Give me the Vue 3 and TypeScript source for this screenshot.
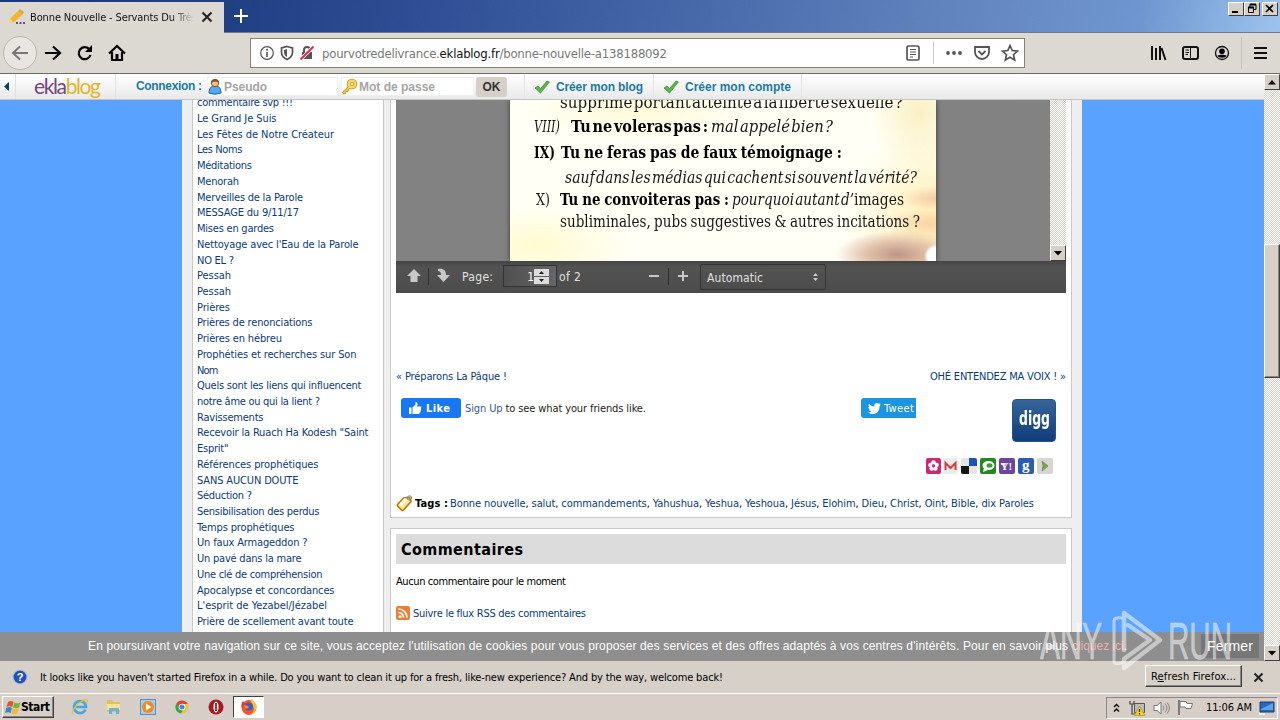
<script setup lang="ts">
interface FitLink { label: string; w: number }
interface Run { t: string; x: number; w: number; k: string }
interface Line { h: number; runs: Run[] }

// Spreads the letters of an element so that the run takes the given width.
const fit = (el: HTMLElement, width: number) => {
  el.style.letterSpacing = '0px'
  const natural = el.getBoundingClientRect().width
  const count = Array.from(el.textContent || '').length
  if (count > 1) el.style.letterSpacing = (width - natural) / (count - 1) + 'px'
  el.style.width = width + 'px'
}
const vFit = { mounted: (el: HTMLElement, b: { value: number }) => fit(el, b.value) }

// Narrows the glyphs themselves, as in a condensed face.
const vSqueeze = {
  mounted: (el: HTMLElement, b: { value: number }) => {
    const natural = el.getBoundingClientRect().width
    el.style.transformOrigin = '0 50%'
    el.style.transform = `scaleX(${b.value / natural})`
    el.style.width = natural + 'px'
    el.style.marginRight = b.value - natural + 'px'
  },
}

const links: FitLink[] = [
  { label: 'commentaire svp !!!', w: 96 },
  { label: 'Le Grand Je Suis', w: 79.5 },
  { label: 'Les Fêtes de Notre Créateur', w: 137 },
  { label: 'Les Noms', w: 45.5 },
  { label: 'Méditations', w: 55 },
  { label: 'Menorah', w: 42 },
  { label: 'Merveilles de la Parole', w: 106 },
  { label: 'MESSAGE du 9/11/17', w: 102 },
  { label: 'Mises en gardes', w: 77 },
  { label: "Nettoyage avec l'Eau de la Parole", w: 161.5 },
  { label: 'NO EL ?', w: 37 },
  { label: 'Pessah', w: 34 },
  { label: 'Pessah', w: 34 },
  { label: 'Prières', w: 33 },
  { label: 'Prières de renonciations', w: 115.5 },
  { label: 'Prières en hébreu', w: 85 },
  { label: 'Prophéties et recherches sur Son', w: 159.5 },
  { label: 'Nom', w: 21.5 },
  { label: 'Quels sont les liens qui influencent', w: 164.5 },
  { label: 'notre âme ou qui la lient ?', w: 123 },
  { label: 'Ravissements', w: 66.5 },
  { label: 'Recevoir la Ruach Ha Kodesh "Saint', w: 171.5 },
  { label: 'Esprit"', w: 31.5 },
  { label: 'Références prophétiques', w: 121.5 },
  { label: 'SANS AUCUN DOUTE', w: 101.5 },
  { label: 'Séduction ?', w: 55 },
  { label: 'Sensibilisation des perdus', w: 122.5 },
  { label: 'Temps prophétiques', w: 97.5 },
  { label: 'Un faux Armageddon ?', w: 110.5 },
  { label: 'Un pavé dans la mare', w: 104.5 },
  { label: 'Une clé de compréhension', w: 125.5 },
  { label: 'Apocalypse et concordances', w: 137.5 },
  { label: "L'esprit de Yezabel/Jézabel", w: 130 },
  { label: 'Prière de scellement avant toute', w: 156.5 },
]

// x is the gap before each run.
const lines: Line[] = [
  { h: 24, runs: [{ t: 'supprimé portant atteinte à la liberté sexuelle ?', x: 50, w: 343, k: 'tight' }] },
  { h: 25, runs: [
    { t: 'VIII)', x: 24, w: 26, k: 'i' },
    { t: 'Tu ne voleras pas :', x: 11, w: 137, k: 'b tight' },
    { t: 'mal appelé bien ?', x: 3, w: 122, k: 'i tight' } ] },
  { h: 26, runs: [
    { t: 'IX)', x: 24, w: 21, k: 'b' },
    { t: 'Tu ne feras pas de faux témoignage :', x: 6, w: 281, k: 'b' } ] },
  { h: 25, runs: [{ t: 'sauf dans les médias qui cachent si souvent la vérité?', x: 55, w: 352, k: 'i tight' }] },
  { h: 21, runs: [
    { t: 'X)', x: 26, w: 14, k: '' },
    { t: 'Tu ne convoiteras pas :', x: 10, w: 169, k: 'b' },
    { t: 'pourquoi autant d’', x: 3, w: 122, k: 'i tight' },
    { t: 'images', x: 0, w: 50, k: '' } ] },
  { h: 23, runs: [{ t: 'subliminales, pubs suggestives & autres incitations ?', x: 50, w: 360, k: '' }] },
]

const tags = ['Bonne nouvelle', 'salut', 'commandements', 'Yahushua', 'Yeshua', 'Yeshoua', 'Jésus', 'Elohim', 'Dieu', 'Christ', 'Oint', 'Bible', 'dix Paroles']
</script>

<template>
  <div class="screen">
    <header class="titlebar">
      <div class="tab">
        <svg class="fav" width="18" height="18" viewBox="0 0 18 18"><path d="M2 11 10 3l4 4-8 7-5 1z" fill="#f2b62a" /><path d="m10 3 2-2 4 3-2 3z" fill="#dba83a" /><path d="m1 15 1-4 3 3z" fill="#f7dc9a" /><path d="M8 15h2m1.500 0h2m1.500 0h2" stroke="#6b4a8c" stroke-width="2" /></svg>
        <span class="tabtext"><span v-fit="167">Bonne Nouvelle - Servants Du Très</span></span>
        <svg width="12" height="12" viewBox="0 0 12 12"><path d="m1.500 1.500 9 9m0-9-9 9" stroke="#222" stroke-width="2" /></svg>
      </div>
      <svg class="plus" width="16" height="16" viewBox="0 0 16 16"><path d="M8 1v14M1 8h14" stroke="#fff" stroke-width="2" /></svg>
      <div class="winbtns">
        <i class="wb"><svg width="14" height="11"><path d="M3 9h6" stroke="#000" stroke-width="2" /></svg></i>
        <i class="wb"><svg width="14" height="11"><path d="M5 1.500h6v5H9M5 1v3" fill="none" stroke="#000" /><path d="M5 1.500h6M3 4.500h6" stroke="#000" stroke-width="2" /><path d="M3.500 4.500h5v5h-5z" fill="none" stroke="#000" /></svg></i>
        <i class="wb last"><svg width="14" height="11"><path d="m3 2 7 7m0-7-7 7" stroke="#000" stroke-width="1.700" /></svg></i>
      </div>
    </header>

    <nav class="toolbar">
      <div class="back"><svg width="18" height="18" viewBox="0 0 18 18"><path d="M17 9H2m7-6.500L2 9l7 6.500" fill="none" stroke="#777" stroke-width="2" /></svg></div>
      <svg class="fwd" width="18" height="18" viewBox="0 0 18 18"><path d="M1 9h15M9 2.500 16 9l-7 6.500" fill="none" stroke="#000" stroke-width="2.200" /></svg>
      <svg class="reload" width="18" height="18" viewBox="0 0 18 18"><path d="M13.500 5.500A6 6 0 1 0 14.500 11" fill="none" stroke="#000" stroke-width="2.200" /><path d="M16 1v7H9z" /></svg>
      <svg class="home" width="18" height="18" viewBox="0 0 18 18"><path d="M1 9.500 9 2l8 7.500M4 8v8h10V8" fill="none" stroke="#000" stroke-width="2.200" /><path d="M7.500 10h3v5h-3z" /></svg>
      <div class="url">
        <svg width="16" height="16" viewBox="0 0 16 16"><circle cx="8" cy="8" r="6.300" fill="none" stroke="#555" stroke-width="1.200" /><path d="M8 7v5" stroke="#555" stroke-width="1.600" /><circle cx="8" cy="4.700" r="1" fill="#555" /></svg>
        <svg class="shield" width="14" height="16" viewBox="0 0 14 16"><path d="M7 1.500 12.500 3v4.500c0 3.500-2.500 5.500-5.500 7-3-1.500-5.500-3.500-5.500-7V3z" fill="none" stroke="#555" stroke-width="1.700" /><path d="M7 4v8C5 11 4 9.500 4 7V5z" fill="#555" /></svg>
        <svg class="lock" width="16" height="16" viewBox="0 0 16 16"><path d="M5 8V5a3 3 0 0 1 6 0v3" fill="none" stroke="#555" stroke-width="2" /><path d="M3 7h10v7H3z" fill="#555" /><path d="M1.500 14.500 14.500 1.500" stroke="#fff" stroke-width="3.500" /><path d="M1.500 14.500 14.500 1.500" stroke="#e22850" stroke-width="2" /></svg>
        <span class="addr" v-fit="345">pourvotredelivrance.<b>eklablog.fr</b>/bonne-nouvelle-a138188092</span>
        <svg class="reader" width="16" height="18" viewBox="0 0 16 18"><rect x="2" y="2" width="12" height="14" rx="1.500" fill="none" stroke="#555" stroke-width="1.700" /><path d="M5 5.500h6M5 8h6m-6 2.500h6M5 13h3" stroke="#555" /></svg>
        <i class="usep"></i>
        <svg class="dots" width="18" height="6"><circle cx="3" cy="3" r="1.900" fill="#555" /><circle cx="9" cy="3" r="1.900" fill="#555" /><circle cx="15" cy="3" r="1.900" fill="#555" /></svg>
        <svg class="pocket" width="18" height="16" viewBox="0 0 18 16"><path d="M2 2h14v5a7 7 0 0 1-14 0z" fill="none" stroke="#555" stroke-width="1.800" /><path d="m5.500 6 3.500 3.500L12.500 6" fill="none" stroke="#555" stroke-width="1.800" /></svg>
        <svg class="star" width="18" height="18" viewBox="0 0 18 18"><path d="m9 1.500 2.200 5 5.300.6-4 3.600 1.200 5.300L9 13.300 4.300 16l1.200-5.300-4-3.600 5.300-.6z" fill="none" stroke="#555" stroke-width="1.700" /></svg>
      </div>
      <div class="tools">
        <svg width="17" height="16" viewBox="0 0 17 16"><path d="M2 1v14M6 3v12M10 1v14M11.500 3l4 12" stroke="#111" stroke-width="2" /></svg>
        <svg width="17" height="16" viewBox="0 0 17 16"><rect x="1" y="2" width="15" height="12" rx="2" fill="none" stroke="#111" stroke-width="2" /><path d="M8.500 2v12M3.500 5H7M3.500 7.500H7m-3.500 2H6" stroke="#111" /></svg>
        <svg width="16" height="16" viewBox="0 0 16 16"><circle cx="8" cy="8" r="6.500" fill="none" stroke="#111" stroke-width="1.300" /><circle cx="8" cy="6.200" r="2.800" /><path d="M3.500 10.500c2-1 7-1 9 0-1 3-8 3-9 0z" /></svg>
        <i class="tsep"></i>
        <svg width="13" height="14"><path d="M0 2h13M0 7h13M0 12h13" stroke="#111" stroke-width="2" /></svg>
      </div>
    </nav>

    <div class="view">
      <div class="web">
        <div class="ekla">
          <svg class="tri" width="6" height="10"><path d="M5 0v9L0 4.500z" fill="#00474f" /></svg>
          <div class="logo"><span v-fit="67"><em>ekla</em>blog</span></div>
          <b class="conn" v-fit="66">Connexion :</b>
          <div class="field f1">
            <svg width="16" height="17" viewBox="0 0 16 17"><path d="M2 15c0-5 2-7 6-7s6 2 6 7q-6 2.500-12 0z" fill="#55a8ea" stroke="#1663ac" /><circle cx="8" cy="5" r="3.700" fill="#f3bf8a" stroke="#87522b" /><path d="M4 5c0-5 8-5 8 0-2-1.500-5-2-8 0z" fill="#8c4e23" /></svg>
            <b v-fit="43">Pseudo</b>
          </div>
          <div class="field f2">
            <svg width="17" height="17" viewBox="0 0 17 17"><circle cx="11" cy="6" r="3.300" fill="none" stroke="#c88e1c" stroke-width="4" /><path d="m8 8-6.500 6 1 2 2-.5.500-2h2l.5-2 3-2" fill="#f4cc45" stroke="#c88e1c" /><circle cx="11" cy="6" r="3.300" fill="none" stroke="#f8d860" stroke-width="2.400" /></svg>
            <b v-fit="76">Mot de passe</b>
          </div>
          <b class="ok">OK</b>
          <div class="create c1"><svg width="16" height="14" viewBox="0 0 16 14"><path d="m1 8 3-2 2.500 2.500L13 1l2.500 1-9 11z" fill="#5db84c" stroke="#328a2e" stroke-width=".7" /></svg><b v-fit="87">Créer mon blog</b></div>
          <div class="create c2"><svg width="16" height="14" viewBox="0 0 16 14"><path d="m1 8 3-2 2.500 2.500L13 1l2.500 1-9 11z" fill="#5db84c" stroke="#328a2e" stroke-width=".7" /></svg><b v-fit="106">Créer mon compte</b></div>
        </div>

        <main class="page">
          <div class="blog">
            <aside class="side">
              <a v-for="(l, i) in links" :key="i"><span v-fit="l.w">{{ l.label }}</span></a>
            </aside>
            <section class="main">
              <article class="post">
                <div class="pdf">
                  <div class="canvas">
                    <div class="sheet">
                      <p v-for="(l, i) in lines" :key="i" :style="{ height: l.h + 'px', lineHeight: l.h + 'px' }">
                        <i v-for="(r, j) in l.runs" :key="j" class="run" :style="{ marginLeft: r.x + 'px', width: r.w + 'px' }"><span v-squeeze="r.w" :class="r.k">{{ r.t }}</span></i>
                      </p>
                    </div>
                    <div class="pdfscroll"><i class="sbtn"><svg width="8" height="5"><path d="M0 0h8L4 4.500z" /></svg></i></div>
                  </div>
                  <div class="pdfbar">
                    <svg class="pu" width="14" height="16"><path d="m7 1 7 7h-3.500v6h-7V8H0z" fill="#c8c8c8" /></svg>
                    <i class="psep"></i>
                    <svg class="pd" width="14" height="16"><path d="M2 1c5-1 8 1 8 6h4l-6.500 7L1 7h4c0-3-1-4-3-4z" fill="#c8c8c8" /></svg>
                    <span class="plabel" v-fit="31">Page:</span>
                    <div class="pnum"><span>1</span><svg width="15" height="15"><path d="M0 0h15v7H0zM0 8h15v7H0z" fill="#ddd" /><path d="M5 5h5L7.500 2zM5 10h5l-2.500 3z" fill="#222" /></svg></div>
                    <span class="pof" v-fit="22">of 2</span>
                    <svg class="pminus" width="12" height="12"><path d="M1 6h10" stroke="#c8c8c8" stroke-width="2" /></svg>
                    <i class="psep"></i>
                    <svg class="pplus" width="12" height="12"><path d="M1 6h10M6 1v10" stroke="#c8c8c8" stroke-width="2" /></svg>
                    <div class="auto"><span v-fit="56">Automatic</span><svg width="7" height="8"><path d="M1 3h5L3.500 0zM1 5h5L3.500 8z" fill="#ccc" /></svg></div>
                  </div>
                </div>
                <div class="prevnext"><a v-fit="111">« Préparons La Pâque !</a><a v-fit="136">OHÉ ENTENDEZ MA VOIX ! »</a></div>
                <div class="social">
                  <div class="like"><svg width="14" height="14" viewBox="0 0 14 14"><path d="M1 6.500h2.500V13H1zM4.500 6.500l3-3V1c1.800 0 2.500 1.500 1.800 4.500h4l-.7 5.500L11 13H4.500z" fill="#fff" /></svg><b v-fit="24">Like</b></div>
                  <span class="signup" v-fit="181"><a>Sign Up</a> to see what your friends like.</span>
                  <div class="tweet"><svg width="13" height="11" viewBox="0 0 13 11"><path d="M0 9.500c1.500 0 2.500-.3 3.500-1-1.300-.2-2-.8-2.300-1.800h1C1 6.200.4 5.300.4 4l1.200.3C.5 3.300.3 2 1 .7c1.500 1.800 3.200 2.600 5.300 2.700C6 1 7.200 0 8.800 0c.8 0 1.400.3 1.900.8L12.400.3l-1 1.500L13 1.400l-1.400 1.500C11.600 8 8.500 11 4.200 11 2.500 11 1 10.400 0 9.500z" fill="#fff" /></svg><span v-fit="30">Tweet</span></div>
                  <div class="digg"><b v-squeeze="31">digg</b></div>
                </div>
                <div class="share">
                  <svg width="127" height="16" viewBox="0 0 127 16">
                    <rect width="15" height="16" rx="2" fill="#ce2775" /><g fill="#fff"><circle cx="7.500" cy="4.500" r="2.300" /><circle cx="4.500" cy="7" r="2.300" /><circle cx="10.500" cy="7" r="2.300" /><circle cx="5.700" cy="10.500" r="2.300" /><circle cx="9.300" cy="10.500" r="2.300" /></g><circle cx="7.500" cy="7.800" r="1.600" fill="#ce2775" />
                    <rect x="17" width="15" height="16" rx="2" fill="#ececec" /><path d="M19.500 12V5l5 5 5-5v7" fill="none" stroke="#d44040" stroke-width="2" />
                    <rect x="35" width="16" height="16" rx="2" fill="#e5e5e5" /><path d="M43 0h6q2 0 2 2v6h-8z" fill="#1a54b8" /><path d="M35 8h8v8h-6q-2 0-2-2z" fill="#151515" />
                    <rect x="54" width="16" height="16" rx="2" fill="#268722" /><ellipse cx="62.500" cy="7.500" rx="6" ry="4.500" fill="#fff" /><path d="m58 10-1 4 5-2z" fill="#fff" /><ellipse cx="63.500" cy="7.500" rx="3" ry="2.200" fill="#3f9a38" />
                    <rect x="73" width="16" height="16" rx="2" fill="#6c45a0" /><text x="74.500" y="12" font-size="11" font-family="Liberation Serif, serif" font-weight="bold" fill="#fff">Y!</text><path d="M75 6h5" stroke="#fff" stroke-width="1.500" />
                    <rect x="92" width="16" height="16" rx="2" fill="#2c5cad" /><text x="96" y="12" font-size="15" font-family="Liberation Serif, serif" font-weight="bold" fill="#fff">g</text>
                    <rect x="111" width="16" height="16" rx="2" fill="#d6d6d0" /><path d="m116 3 6 5-6 5 1-5z" fill="#6fb02a" stroke="#777" stroke-width=".7" />
                  </svg>
                </div>
                <div class="tags">
                  <svg width="17" height="17" viewBox="0 0 17 17"><path d="m1.500 9.500 6-6.500 6-.5 1.500 4-7.500 8.500q-1 1-2 0l-4-4z" fill="#ffe98f" stroke="#b87a10" stroke-width="1.700" /><circle cx="13.500" cy="3" r="2.200" fill="none" stroke="#888" /><path d="m4.500 10 5.500-6" stroke="#fff" stroke-width="3" /></svg>
                  <b v-fit="33">Tags :</b>
                  <span v-fit="584"><template v-for="(t, i) in tags" :key="t"><a>{{ t }}</a>{{ i < tags.length - 1 ? ', ' : '' }}</template></span>
                </div>
              </article>
              <article class="comments">
                <h2><span v-fit="122">Commentaires</span></h2>
                <p class="none"><span v-fit="170">Aucun commentaire pour le moment</span></p>
                <p class="rss"><svg width="14" height="14"><rect width="14" height="14" rx="2" fill="#ed8038" /><circle cx="4" cy="10.500" r="1.500" fill="#fff" /><path d="M2.500 6.500a5 5 0 0 1 5 5M2.500 3a8.500 8.500 0 0 1 8.500 8.500" fill="none" stroke="#fff" stroke-width="1.700" /></svg><a v-fit="173">Suivre le flux RSS des commentaires</a></p>
              </article>
            </section>
          </div>
        </main>

        <div class="cookies">
          <span class="ctext" v-fit="980">En poursuivant votre navigation sur ce site, vous acceptez l'utilisation de cookies pour vous proposer des services et des offres adaptés à vos centres d'intérêts. Pour en savoir plus</span>
          <span class="clink" v-fit="55"><a>cliquez ici</a>.</span>
          <span class="close"><span v-fit="46">Fermer</span></span>
        </div>
      </div>

      <div class="scroll">
        <i class="sbtn"><svg width="8" height="5"><path d="M0 4.500h8L4 0z" /></svg></i>
        <i class="thumb"></i>
        <i class="sbtn"><svg width="8" height="5"><path d="M0 0h8L4 4.500z" /></svg></i>
      </div>
    </div>

    <div class="notice">
      <svg width="16" height="16" viewBox="0 0 16 16"><circle cx="8" cy="8" r="7.700" fill="#b9c6e2" /><circle cx="8" cy="8" r="6.500" fill="#2551b5" /><text x="4.700" y="12" font-size="11" font-weight="bold" font-family="Liberation Sans, sans-serif" fill="#fff">?</text></svg>
      <span class="ntext" v-fit="683">It looks like you haven't started Firefox in a while. Do you want to clean it up for a fresh, like-new experience? And by the way, welcome back!</span>
      <span class="refresh"><span v-fit="85">R<u>e</u>fresh Firefox...</span></span>
      <svg width="11" height="11"><path d="m1.500 1.500 8 8m0-8-8 8" stroke="#222" stroke-width="2" /></svg>
    </div>

    <footer class="task">
      <div class="start"><svg width="16" height="15" viewBox="0 0 16 15"><path d="M3 2q3-2 5.500 0L7.300 7q-3-1.500-5.800 0z" fill="#e8512b" /><path d="M9.300 2.500q3 1.500 6 0L14 7.500q-3 1.500-6 0z" fill="#74b72e" /><path d="M1.200 8q3-2 5.700 0l-1.200 5Q3 11.500 0 13z" fill="#3b82d3" /><path d="M7.700 8.500q3 1.500 6 0l-1.300 5q-3 1.500-6 0z" fill="#f7bd20" /></svg><b v-fit="29">Start</b></div>
      <svg class="ico ie" width="18" height="18" viewBox="0 0 18 18"><path d="M14.500 11.500A6 6 0 1 1 15 9H5" fill="none" stroke="#46a8e2" stroke-width="2.700" /><path d="M2 16C-1 13 11 0 16 2c1 .7 0 2.500-.5 3" fill="none" stroke="#e9bb41" stroke-width="1.300" /></svg>
      <svg class="ico" width="18" height="18" viewBox="0 0 18 18"><path d="M2 4V2h5l1 2h7v10H2z" fill="#dfc05c" /><path d="M2 6h13v6H2z" fill="#f6e294" /><path d="M4 16v-5q0-1 1-1h8q1 0 1 1v5h-3v-3H7v3z" fill="#65b4df" /></svg>
      <svg class="ico" width="18" height="18" viewBox="0 0 18 18"><rect x="1.500" y="1.500" width="15" height="15" fill="#a9cbed" stroke="#5791c8" /><circle cx="9" cy="9" r="6" fill="#f28a1c" /><path d="m7 5.500 5.500 3.500L7 12.500z" fill="#fff" /></svg>
      <svg class="ico" width="16" height="16" viewBox="0 0 16 16"><circle cx="8" cy="8" r="6.500" fill="#e5c735" /><path d="M2.300 4.800A6.500 6.500 0 0 1 13.800 5H8L5.500 9.500z" fill="#da4437" /><path d="m2.300 4.800 3.700 5.700 2.500 1L7 14.500A6.500 6.500 0 0 1 2.300 4.800z" fill="#34a250" /><circle cx="8" cy="8" r="3.300" fill="#fff" /><circle cx="8" cy="8" r="2.500" fill="#4285e5" /></svg>
      <svg class="ico" width="16" height="16" viewBox="0 0 16 16"><circle cx="8" cy="8" r="7.500" fill="#a61a20" /><ellipse cx="8" cy="8" rx="2.600" ry="5.500" fill="#f6eaea" /><path d="M8 4v8" stroke="#801015" stroke-width="1.600" /></svg>
      <div class="active"><svg width="18" height="18" viewBox="0 0 18 18"><circle cx="9" cy="9.500" r="7.500" fill="#f6552a" /><path d="M11 1c4 3 6 5 5 10-1 4-4 6-7 6 3-1 5-3 5-6s-4-4-3-10z" fill="#fbc12e" /><path d="M1.500 9C1 6 2 4 3 3c1 1 2 2 3 2-1 2 1 3 2 4z" fill="#e53a45" /><circle cx="9" cy="8.500" r="4" fill="#3b5fc4" /><path d="M4 7c2 0 4 1 5 2-1 2-3 2-4 1z" fill="#f98926" /></svg></div>
      <div class="tray">
        <svg width="7" height="10"><path d="m1 4 2.500-2.500L6 4M1 8.500 3.500 6 6 8.500" fill="none" stroke="#000" stroke-width="1.400" /></svg>
        <svg class="net" width="17" height="16" viewBox="0 0 17 16"><path d="M5.500 3.500h10v9h-10z" fill="#bbb" stroke="#555" /><path d="M1 1v3h4V1M3 4v10h3" fill="none" stroke="#444" stroke-width="1.200" /><path d="m10.500 6 5.500 9.500H5.500z" fill="#f6d21b" stroke="#a48a10" stroke-width=".6" /><path d="M10.500 9v3m0 1v1.500" stroke="#222" stroke-width="1.200" /></svg>
        <svg class="vol" width="17" height="14" viewBox="0 0 17 14"><path d="M1 4.500h3L8 1v12L4 9.500H1z" fill="#f7f7f7" stroke="#777" /><path d="M10 4.500q2 2.500 0 5m2-7q4 4.500 0 9m2-10q5 5.500 0 11" fill="none" stroke="#888" /></svg>
        <svg class="flag" width="17" height="15" viewBox="0 0 17 15"><path d="M2 0v15" stroke="#666" stroke-width="1.600" /><path d="M3 1.500h6l1 2h5.500L14 8.500H9l-1-1.500H3z" fill="#fff" stroke="#777" /></svg>
        <span class="time" v-fit="46">11:06 AM</span>
        <svg class="mon" width="16" height="14" viewBox="0 0 16 14"><path d="M1 1h14v10H1z" fill="#2467bd" stroke="#223d69" /><path d="M2 8 14 2v7H2z" fill="#5ea5e5" /><path d="M0 12h6v2H0z" fill="#eee" /></svg>
      </div>
    </footer>

    <svg class="mark" width="200" height="70" viewBox="0 0 200 70">
      <g fill="none" stroke="#fff" stroke-opacity=".5" stroke-linejoin="round" stroke-linecap="round"><path d="M81 13q-7-1-7 3V56q0 4 7 2" stroke-width="3" /><path d="M84 45V8l36 27-36 28v-9l26-19-22-15" stroke-width="4.500" /></g>
      <g fill="#fff" fill-opacity=".5" stroke="#fff" stroke-opacity=".3" stroke-width="1" font-family="Liberation Sans Narrow, Liberation Sans, sans-serif" font-size="52"><text x="0" y="54" textLength="62" lengthAdjust="spacingAndGlyphs">ANY</text><text x="128" y="54" textLength="64" lengthAdjust="spacingAndGlyphs">RUN</text></g>
    </svg>
  </div>
</template>

<style>
html, body { margin: 0; overflow: hidden; }
</style>

<style scoped>
* { box-sizing: border-box; }
.screen { position: relative; width: 1280px; height: 720px; display: flex; flex-direction: column; overflow: hidden; font: 11px "DejaVu Sans Condensed", "DejaVu Sans", sans-serif; color: #000; background: #d6cec7; white-space: nowrap; }
.screen span, .screen b, .screen a { white-space: pre; flex: none; }
svg { flex: none; display: block; }
p, h2 { margin: 0; }
.titlebar { height: 33px; flex: none; display: flex; background: linear-gradient(100deg, #19377c 0%, #213f83 18%, #304f96 34%, #4769aa 54%, #6385bf 75%, #6f96d0 89%, #9cc4ed 100%); border-bottom: 1px solid #747a86; }
.tab { width: 224px; height: 33px; padding: 0 11px 3px 8px; margin-top: 2px; background: #dcd8d2; display: flex; align-items: center; }
.tab .fav { margin-right: 4px; }
.tabtext { width: 164px; margin-right: 7px; overflow: hidden; color: #111; -webkit-mask-image: linear-gradient(90deg, #000 86%, transparent 100%); mask-image: linear-gradient(90deg, #000 86%, transparent 100%); }
.tabtext span { display: inline-block; }
.plus { margin: 8px 0 0 9px; }
.winbtns { margin: 2px 2px 0 auto; display: flex; }
.wb { width: 16px; height: 14px; background: #d6d0c8; border: 1px solid; border-color: #fff #404040 #404040 #fff; }
.last { margin-left: 2px; }
.toolbar { height: 41px; flex: none; display: flex; align-items: center; background: #dcd8d2; border-bottom: 1px solid #6d6b68; padding-left: 3px; }
.back { width: 34px; height: 34px; border-radius: 50%; border: 1px solid #b8b4ae; background: #e9e6e2; display: grid; place-items: center; }
.fwd { margin-left: 7px; }
.reload { margin-left: 14px; }
.home { margin-left: 14px; }
.url { width: 775px; height: 30px; margin-left: 124px; background: #fff; border: 1px solid #858179; display: flex; align-items: center; padding-left: 8px; }
.shield { margin-left: 5px; }
.lock { margin-left: 5px; }
.addr { display: inline-block; margin-left: 7px; font-size: 13px; color: #777; }
.addr b { font-weight: normal; color: #111; }
.reader { margin-left: 238px; }
.usep { width: 1px; height: 22px; background: #c8c8c8; margin-left: 12px; }
.dots { margin-left: 11px; }
.pocket { margin-left: 10px; }
.star { margin-left: 10px; }
.tools { display: flex; align-items: center; margin-left: 125px; gap: 15px; }
.tools .tsep { width: 1px; height: 32px; background: #c6c1ba; margin: 0 -3px 0 -4px; }
.view { height: 587px; flex: none; display: flex; }
.web { width: 1264px; height: 587px; display: flex; flex-direction: column; background: #5aa2ff; }
.ekla { height: 26px; flex: none; display: flex; align-items: center; background: linear-gradient(#fff, #e9e9e9); border-bottom: 1px solid #c5c5c5; font: 12px "Liberation Sans", Arial, sans-serif; }
.ekla b { display: inline-block; }
.tri { margin-left: 4px; }
.logo { width: 101px; height: 25px; margin-left: 5px; border: solid #e1e1e1; border-width: 0 1px; padding-left: 18px; font: 21px/23px Lato, sans-serif; color: #e3b52d; }
.logo span { display: inline-block; }
.logo em { font-style: normal; color: #73477f; }
.conn { color: #1c7ba2; margin-left: 20px; position: relative; top: -1px; }
.field { height: 19px; background: #fff; display: flex; align-items: center; color: #a5a5a5; box-shadow: inset 0 0 0 1px #f0f0f0; }
.f1 { width: 131px; margin-left: 5px; }
.f2 { width: 133px; margin-left: 3px; }
.field b { margin-left: 1px; }
.ok { width: 31px; height: 20px; line-height: 21px; margin-left: 2px; border-radius: 3px; background: #d5cfc8; color: #333; text-align: center; }
.create { display: flex; align-items: center; gap: 6px; color: #1c7ba2; height: 25px; border-left: 1px solid #e5e5e5; }
.c1 { margin-left: 17px; padding-left: 9px; }
.c2 { margin-left: 10px; padding: 0 10px 0 9px; border-right: 1px solid #e5e5e5; }
.page { height: 532px; flex: none; overflow: hidden; }
.blog { width: 900px; height: 532px; margin-left: 182px; padding: 0 10px; background: linear-gradient(90deg, #eaf0f4 0, #eee 4px, #eee 896px, #f5e9e4 900px); display: flex; gap: 6px; }
.side { width: 192px; height: 532px; background: #fff; border: solid #c9c9c9; border-width: 0 1px; padding-left: 4px; overflow: hidden; color: #0b3a7c; }
.side a { display: block; height: 15.72px; line-height: 15.72px; position: relative; top: -4.7px; }
.side span { display: inline-block; }
.main { width: 682px; height: 532px; display: flex; flex-direction: column; }
.post { height: 418px; flex: none; background: #fff; border: solid #c9c9c9; border-width: 0 1px 1px; padding: 0 5px; display: flex; flex-direction: column; }
.post a, .rss a { color: #0b3a7c; }
.pdf { height: 193px; flex: none; }
.canvas { height: 161px; background: #828282; display: flex; overflow: hidden; }
.sheet { width: 426px; height: 161px; margin-left: 114px; margin-right: 114px; overflow: hidden; box-shadow: 0 0 5px #333; font: 17px "DejaVu Serif Condensed", "DejaVu Serif", serif; color: #171717;
  background: radial-gradient(ellipse 12px 12px at 100% 97%, #fff 0 70%, transparent 100%), radial-gradient(ellipse 62px 24px at 91% 96%, #bd9687 0, #d9b29bcc 50%, transparent 100%), radial-gradient(ellipse 35px 12px at 100% 61%, #eba88888, transparent), radial-gradient(ellipse 45px 15px at 98% 77%, #f0b88f77, transparent), radial-gradient(ellipse 50px 55px at 96% 8%, #f8e6a199, transparent), radial-gradient(ellipse 90px 95px at 100% 75%, #ffe9a0cc, transparent), radial-gradient(ellipse 100px 40px at 6% 90%, #fffbd0, transparent), radial-gradient(ellipse 120px 35px at 30% 5%, #fffbd8, transparent), #fffff6; }
.sheet p { display: flex; }
.sheet p:first-child { margin-top: -10px; }
.sheet p:nth-child(5) { margin-top: -1px; }
.run { display: block; flex: none; font-style: normal; }
.sheet span { display: inline-block; word-spacing: -1px; }
.sheet .b { font-weight: bold; color: #000; }
.sheet .i { font-style: italic; }
.sheet .tight { word-spacing: -3.5px; }
.pdfscroll { width: 16px; background: repeating-conic-gradient(#d4d0c8 0 25%, #fff 0 50%) 0 0 / 2px 2px; display: flex; align-items: flex-end; }
.sbtn { width: 16px; height: 16px; flex: none; display: grid; place-items: center; background: #d6d0c8; border: 1px solid; border-color: #fff #404040 #404040 #fff; }
.pdfbar { height: 32px; display: flex; align-items: center; background: linear-gradient(#454545, #535353 20%, #4b4b4b); color: #e0e0e0; font-size: 12px; padding: 0 0 2px 11px; }
.pdfbar span { display: inline-block; padding-top: 2px; }
.psep { width: 1px; height: 17px; background: #303030; margin-left: 7px; }
.pd { margin-left: 7px; }
.plabel { margin-left: 12px; }
.pnum { width: 54px; height: 22px; margin-left: 10px; border: 1px solid #333; background: linear-gradient(90deg, #505050, #666); display: flex; align-items: center; justify-content: flex-end; padding-right: 7px; color: #fff; }
.pof { margin-left: 2px; }
.pminus { margin-left: 67px; }
.pdfbar .pminus + .psep { margin-left: 8px; }
.pplus { margin-left: 8px; }
.auto { width: 126px; height: 26px; margin: 2px 0 0 11px; border: 1px solid #343434; border-radius: 2px; display: flex; align-items: center; justify-content: space-between; padding: 0 6px; }
.prevnext { margin-top: 75px; height: 16px; display: flex; justify-content: space-between; align-items: center; }
.prevnext a { display: inline-block; }
.social { margin-top: 14px; height: 44px; display: flex; align-items: flex-start; padding-left: 5px; }
.like { width: 60px; height: 20px; background: #1877f2; border-radius: 3px; color: #fff; display: flex; align-items: center; padding-left: 7px; gap: 4px; }
.like b, .signup { display: inline-block; }
.signup { margin-left: 4px; line-height: 21px; color: #1c1e21; }
.signup a { color: #365899; }
.tweet { width: 55px; height: 20px; margin-left: 215px; background: #1b95e0; border-radius: 3px 0 0 3px; color: #fff; display: flex; align-items: center; padding-left: 7px; gap: 3px; }
.tweet span { display: inline-block; }
.digg { width: 44px; height: 43px; margin: 1px 0 0 96px; border-radius: 4px; background: linear-gradient(#35659b, #113d78); border: 1px solid #245588; color: #fff; font: 20px/37px "DejaVu Sans Condensed", sans-serif; padding-left: 6px; }
.digg b { display: inline-block; }
.share { margin: 16px 13px 0 0; align-self: flex-end; }
.tags { margin-top: 20px; height: 18px; display: flex; align-items: center; }
.tags b { display: inline-block; margin-left: 2px; }
.tags > span { display: inline-block; margin-left: 2px; }
.comments { margin-top: 10px; height: 110px; background: #fff; border: 1px solid #c9c9c9; border-bottom: 0; padding: 5px 5px 0; }
.comments h2 { height: 30px; line-height: 32px; background: #dcdcdc; padding-left: 5px; font-size: 16px; }
.comments span, .rss a { display: inline-block; }
.none { margin-top: 9px; line-height: 18px; }
.rss { display: flex; align-items: center; margin-top: 13px; height: 18px; gap: 3px; }
.cookies { height: 29px; flex: none; background: #8e8e8e; color: #fff; display: flex; align-items: center; padding: 0 0 1px 88px; font: 12px "Liberation Sans", Arial, sans-serif; }
.cookies span { display: inline-block; }
.clink { margin-left: 4px; }
.clink a { color: #edb0b0; }
.close { width: 58px; height: 24px; line-height: 25px; margin-left: 74px; background: #777; font-size: 14px; padding-left: 6px; }
.scroll { width: 16px; height: 587px; background: repeating-conic-gradient(#d4d0c8 0 25%, #fff 0 50%) 0 0 / 2px 2px; display: flex; flex-direction: column; }
.thumb { height: 134px; margin: 154px 0 267px; flex: none; background: #d6d0c8; border: 1px solid; border-color: #fff #404040 #404040 #fff; box-shadow: inset -1px -1px #888; }
.notice { height: 32px; flex: none; display: flex; align-items: center; padding-left: 12px; background: #d6d0c8; }
.ntext { display: inline-block; margin-left: 12px; }
.refresh { width: 97px; height: 22px; line-height: 21px; margin: -2px 11px 0 422px; border: 1px solid; border-color: #fff #404040 #404040 #fff; box-shadow: inset -1px -1px #888; padding-left: 5px; }
.refresh span { display: inline-block; }
.task { height: 27px; flex: none; border-top: 1px solid #fff; background: #d6cec7; display: flex; align-items: center; padding-left: 2px; }
.start { width: 52px; height: 22px; border: 1px solid; border-color: #fff #404040 #404040 #fff; box-shadow: inset -1px -1px #888; display: flex; align-items: center; padding-left: 2px; font-size: 12px; }
.start b { display: inline-block; }
.ico { width: 18px; margin-left: 16px; }
.ie { margin-left: 17px; }
.active { width: 31px; height: 22px; margin-left: 8px; background: #fff; border: 1px solid; border-color: #404040 #fff #fff #404040; display: grid; place-items: center; }
.tray { width: 172px; height: 22px; margin: 1px 2px 0 auto; border: 1px solid; border-color: #888 #fff #fff #888; display: flex; align-items: center; padding-left: 6px; }
.net { margin-left: 9px; }
.vol { margin-left: 7px; }
.flag { margin-left: 7px; }
.time { display: inline-block; margin-left: 12px; }
.mon { margin-left: 7px; }
.mark { position: absolute; left: 1040px; top: 605px; }
</style>
